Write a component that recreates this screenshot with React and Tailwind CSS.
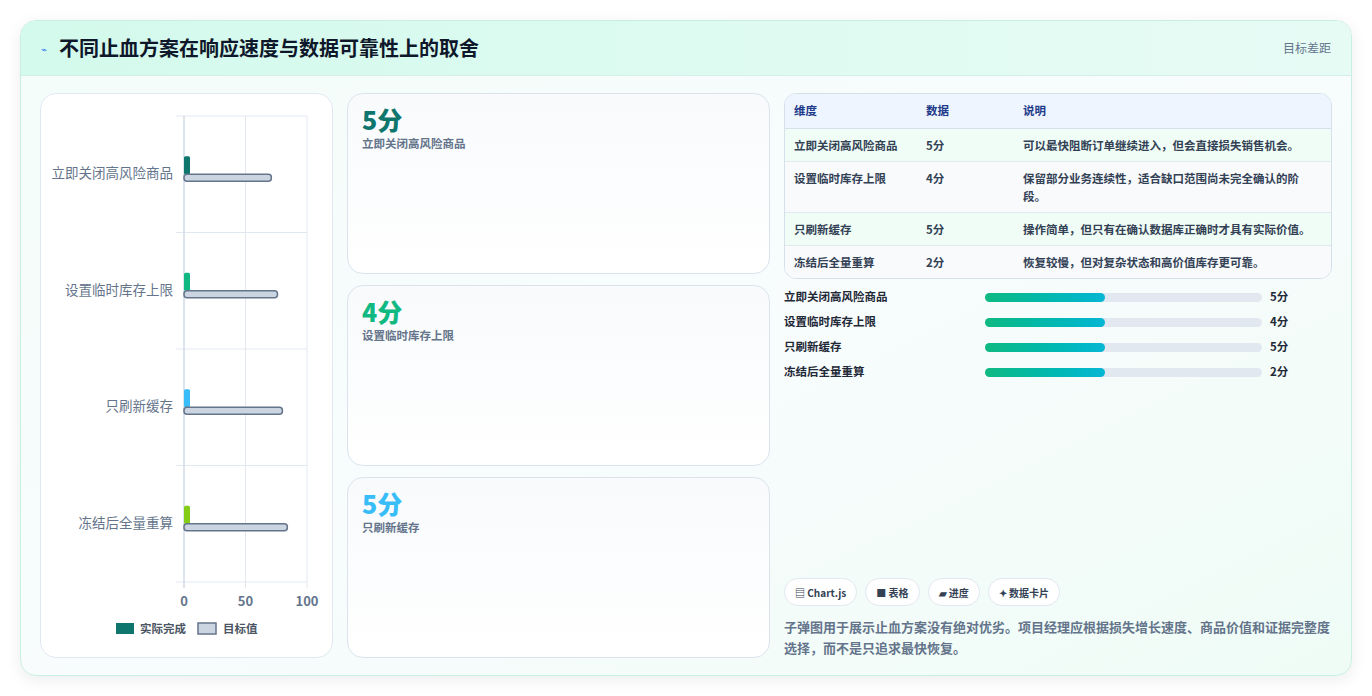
const rows = [
  { name: "立即关闭高风险商品", score: "5分", color: "#0f766e", target: 71, desc: "可以最快阻断订单继续进入，但会直接损失销售机会。" },
  { name: "设置临时库存上限", score: "4分", color: "#10b981", target: 76, desc: "保留部分业务连续性，适合缺口范围尚未完全确认的阶段。" },
  { name: "只刷新缓存", score: "5分", color: "#38bdf8", target: 80, desc: "操作简单，但只有在确认数据库正确时才具有实际价值。" },
  { name: "冻结后全量重算", score: "2分", color: "#84cc16", target: 84, desc: "恢复较慢，但对复杂状态和高价值库存更可靠。" },
];

const font = { fontFamily: '"Noto Sans CJK SC", "Noto Sans", sans-serif' };

function Chart() {
  const x0 = 143, w = 123, top = 22, rowH = 116.5;
  return (
    <svg width="292" height="563" className="block">
      {[0, 50, 100].map((v) => (
        <line key={v} x1={x0 + (w * v) / 100} x2={x0 + (w * v) / 100} y1={top} y2={top + rowH * 4 + 6} stroke="#e2e8f0" />
      ))}
      {[0, 1, 2, 3, 4].map((i) => (
        <line key={i} x1={x0 - 8} x2={x0 + w} y1={top + rowH * i} y2={top + rowH * i} stroke="#e2e8f0" />
      ))}
      <line x1={x0} x2={x0} y1={top} y2={top + rowH * 4 + 6} stroke="#cbd5e1" />
      {rows.map((r, i) => {
        const cy = top + rowH * i + rowH / 2 - 1;
        return (
          <g key={r.name}>
            <text x={x0 - 11} y={cy + 5} textAnchor="end" fontSize="13.5" fill="#64748b">{r.name}</text>
            <rect x={x0} y={cy - 17} width="6" height="18" rx="1.5" fill={r.color} />
            <rect x={x0} y={cy + 1} width={(w * r.target) / 100} height="7" rx="3" fill="#cbd5e1" stroke="#64748b" strokeWidth="1.5" />
          </g>
        );
      })}
      {[0, 50, 100].map((v) => (
        <text key={v} x={x0 + (w * v) / 100} y={top + rowH * 4 + 24} textAnchor="middle" fontSize="13" fontWeight="600" fill="#64748b">{v}</text>
      ))}
      <rect x="75" y="529" width="18" height="11" fill="#0f766e" />
      <text x="99" y="539" fontSize="11.5" fontWeight="600" fill="#4b5563">实际完成</text>
      <rect x="157" y="529" width="18" height="11" fill="#cbd5e1" stroke="#64748b" strokeWidth="1.5" />
      <text x="182" y="539" fontSize="11.5" fontWeight="600" fill="#4b5563">目标值</text>
    </svg>
  );
}

export default function App() {
  const cards = [
    { v: "5分", l: "立即关闭高风险商品", c: "text-[#0f766e]" },
    { v: "4分", l: "设置临时库存上限", c: "text-[#10b981]" },
    { v: "5分", l: "只刷新缓存", c: "text-[#38bdf8]" },
  ];
  return (
    <div className="w-[1372px] h-[696px] bg-white p-5" style={font}>
      <div className="h-[656px] rounded-2xl border border-[#c9efe3] bg-gradient-to-br from-[#f3fdf9] via-[#f8fcfd] to-[#effcf6] shadow-[0_4px_16px_rgba(15,23,42,0.08)] overflow-hidden flex flex-col">
        <div className="h-[55px] shrink-0 flex items-center justify-between px-5 bg-gradient-to-r from-[#d3faec] to-[#e7fbf5] border-b border-[#d5efe7]">
          <div className="flex items-center gap-3">
            <span className="text-[10px] text-[#3b82f6]">⌁</span>
            <h1 className="text-[20px] font-bold text-[#0f172a]">不同止血方案在响应速度与数据可靠性上的取舍</h1>
          </div>
          <span className="text-[12px] text-[#64748b]">目标差距</span>
        </div>
        <div className="flex-1 flex gap-[14px] px-[19px] pt-[17px] pb-[19px]">
          <div className="w-[293px] shrink-0 rounded-2xl border border-[#e2e8f0] bg-white">
            <Chart />
          </div>
          <div className="w-[423px] shrink-0 flex flex-col gap-[11px]">
            {cards.map((c) => (
              <div key={c.l} className="flex-1 rounded-2xl border border-[#dbe4ee] bg-gradient-to-b from-[#f8fafc] to-white px-[14px] pt-[9px]">
                <div className={`text-[25px] font-extrabold leading-[32px] ${c.c}`}>{c.v}</div>
                <div className="text-[11.5px] font-semibold text-[#64748b]">{c.l}</div>
              </div>
            ))}
          </div>
          <div className="flex-1 flex flex-col">
            <div className="rounded-xl border border-[#d6e0ea] overflow-hidden">
              <table className="w-full text-[11.5px] font-semibold text-[#334155]">
                <thead>
                  <tr className="bg-[#eef5fe] text-[#1e3a8a] h-[34px] text-left border-b border-[#d6e0ea]">
                    <th className="pl-[9px] w-[141px] font-bold">维度</th>
                    <th className="w-[97px] font-bold">数据</th>
                    <th className="font-bold">说明</th>
                  </tr>
                </thead>
                <tbody>
                  {rows.map((r, i) => (
                    <tr key={r.name} className={`${i % 2 ? "bg-[#f8fafc]" : "bg-[#f0fdf6]"} border-b border-[#e2e8f0] last:border-0`}>
                      <td className="pl-[9px] py-[7px] align-top leading-[18px]">{r.name}</td>
                      <td className="py-[7px] align-top leading-[18px]">{r.score}</td>
                      <td className="py-[7px] pr-[14px] align-top leading-[18px]">{r.desc}</td>
                    </tr>
                  ))}
                </tbody>
              </table>
            </div>
            <div className="mt-[6px] flex flex-col">
              {rows.map((r) => (
                <div key={r.name} className="h-[25px] flex items-center text-[11.5px] font-semibold text-[#1f2937]">
                  <span className="w-[201px]">{r.name}</span>
                  <div className="w-[277px] h-[9px] rounded-full bg-[#e2e8f0]">
                    <div className="w-[120px] h-full rounded-full bg-gradient-to-r from-[#10b981] to-[#06b6d4]" />
                  </div>
                  <span className="ml-[8px]">{r.score}</span>
                </div>
              ))}
            </div>
            <div className="mt-auto flex gap-2">
              {["▤ Chart.js", "■ 表格", "▰ 进度", "✦ 数据卡片"].map((t) => (
                <span key={t} className="h-[28px] px-[10px] flex items-center rounded-full border border-[#e2e8f0] bg-white text-[10px] font-bold text-[#334155]">{t}</span>
              ))}
            </div>
            <p className="mt-[10px] text-[13px] leading-[21px] text-[#64748b] font-semibold">子弹图用于展示止血方案没有绝对优劣。项目经理应根据损失增长速度、商品价值和证据完整度选择，而不是只追求最快恢复。</p>
          </div>
        </div>
      </div>
    </div>
  );
}
